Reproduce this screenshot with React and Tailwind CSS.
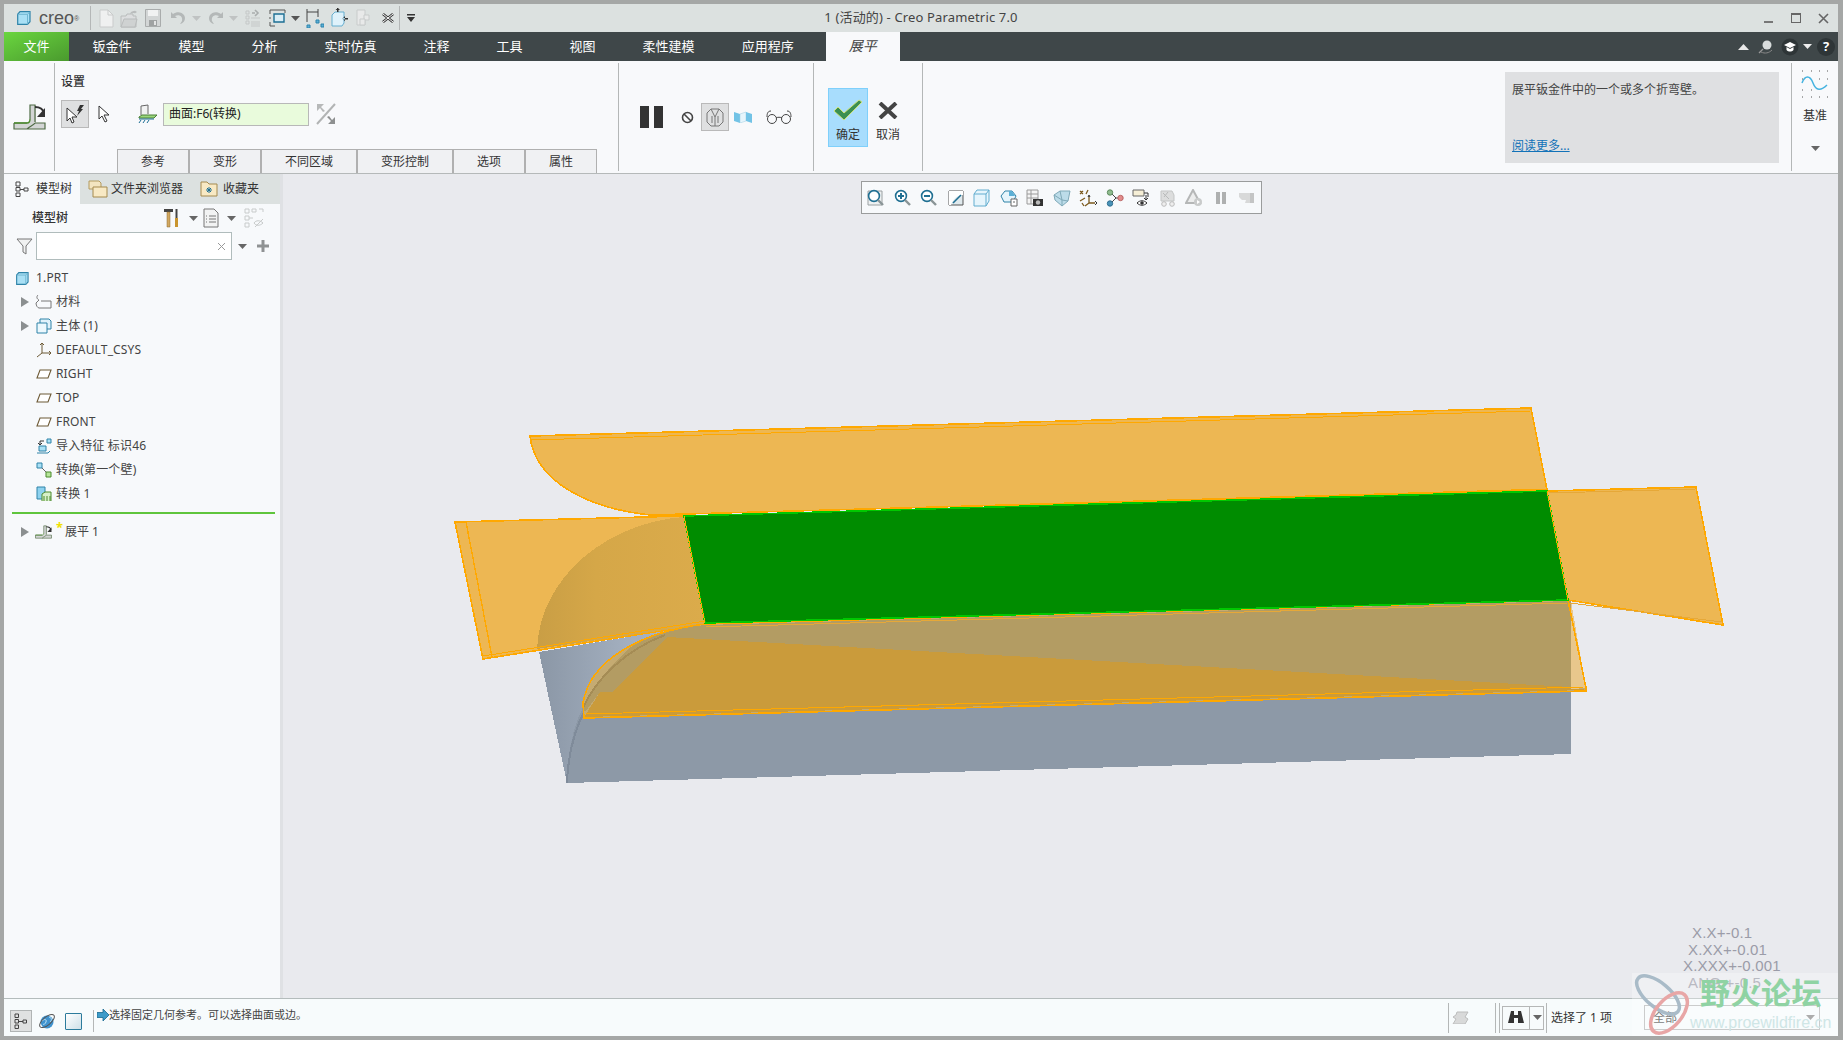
const Sep = ({ className = "" }) => <div className={`w-px shrink-0 bg-[#b4b7b7] ${className}`} />;

const Caret = ({ className = "", color = "#555" }) => (
  <svg width="9" height="5" viewBox="0 0 9 5" className={`shrink-0 ${className}`}><path d="M0 0h9L4.5 5z" fill={color} /></svg>
);
const TreeCaret = () => (
  <svg width="8" height="10" viewBox="0 0 8 10" className="shrink-0"><path d="M0 0l8 5-8 5z" fill="#8b8f90" /></svg>
);

const CubeIcon = ({ size = 14 }) => (
  <svg width={size} height={size} viewBox="0 0 14 14" className="shrink-0">
    <path d="M3 .7h10v10l-2.5 2.6H.7V3.3z" fill="#a9e0f5" stroke="#2f83a8" strokeWidth="1.2" />
    <path d="M.7 3.3h9.8v10M10.5 3.3L13 .7" fill="none" stroke="#6fb6d1" />
  </svg>
);

const NewIcon = () => (
  <svg width="15" height="19" viewBox="0 0 15 19"><path d="M1 1h8l5 5v12H1z" fill="#eff0f0" stroke="#c9cbcb" /><path d="M9 1v5h5" fill="none" stroke="#c9cbcb" /></svg>
);
const OpenIcon = () => (
  <svg width="18" height="19" viewBox="0 0 18 19"><path d="M1 7h5l1-2h6v2l3 0v11H1z" fill="#dcdedf" stroke="#b9bcbc" /><path d="M1 18l3-8h13l-2 8z" fill="#cfd2d2" stroke="#b9bcbc" /><path d="M10 5c1-3 3-3 5-3l-1-1 3 2-3 2 1-1c-2 0-3 0-5 1z" fill="#b9bcbc" /></svg>
);
const SaveIcon = () => (
  <svg width="16" height="18" viewBox="0 0 16 18"><path d="M.5.5h15v17H.5z" fill="#d2d5d5" stroke="#a9acac" /><path d="M3 1h10v6H3z" fill="#f1f2f2" /><path d="M4 11h8v6H4z" fill="#9fa2a2" /><path d="M9 12h2v4H9z" fill="#e3e4e4" /></svg>
);
const UndoIcon = ({ flip }) => (
  <svg width="16" height="14" viewBox="0 0 16 14" style={flip ? { transform: "scaleX(-1)" } : undefined}><path d="M1 1v6h6L5 5c4-2 8 0 7 5l-2 3c5-1 6-6 4-9-2-3-7-4-11-1z" fill="#b4b8b8" /></svg>
);
const RegenIcon = () => (
  <svg width="16" height="18" viewBox="0 0 16 18" fill="none" stroke="#c4c7c7"><path d="M1 2h3v3H1zM1 7h3v3H1zM1 12h3v3H1zM6 13h9M6 15h9M6 17h9M6 9h9" /><path d="M7 4h3M10 1l3 3-3 3" stroke="#a9adad" strokeWidth="1.6" /></svg>
);
const WindowsIcon = () => (
  <svg width="17" height="18" viewBox="0 0 17 18" fill="none"><path d="M1 1h15M1 1v4M16 1v3M1 13v4h5M1 8v2" stroke="#555" /><path d="M5 5h10v8H5z" fill="#d9edf6" stroke="#1d6f94" strokeWidth="1.4" /></svg>
);
const DimIcon = () => (
  <svg width="18" height="20" viewBox="0 0 18 20" fill="none"><path d="M1 1v13M12 1v8M1 4h11" stroke="#444" /><path d="M1 17h3v3H1zM10 12h3v3h-3zM15 16h3v3h-3z" fill="#5cb0d6" stroke="#2c84ad" /></svg>
);
const BoxArrowIcon = () => (
  <svg width="17" height="20" viewBox="0 0 17 20"><path d="M1 7l3-3h9v11l-2 3H1z" fill="#dff2fb" stroke="#67afd0" /><path d="M6 0h1.5v4H6zM4.6 2l2.1-2.2L9 2M12 10h5v1.5h-5zM14 8l-2.5 2.7 2.5 2.6z" fill="#333" /></svg>
);
const CopyIcon = () => (
  <svg width="16" height="18" viewBox="0 0 16 18" fill="#e8e9e9" stroke="#c8cbcb"><path d="M1 1h8v15H1z" /><path d="M8 6h5v5H8z" /><path d="M4 10h5v6H4z" /></svg>
);
const CloseXIcon = () => (
  <svg width="12" height="10" viewBox="0 0 12 10"><path d="M1 1l10 8M11 1L1 9" stroke="#333" strokeWidth="2.6" /><path d="M1 1l10 8M11 1L1 9" stroke="#fff" strokeWidth="1" /></svg>
);

const FlatIcon = ({ small }) => (
  <svg width={small ? 17 : 33} height={small ? 14 : 26} viewBox="0 0 33 26" className="shrink-0">
    <path d="M1 19h13c2 0 3-2 3-4V1h6v18h9v6H1z" fill="#d3d5d5" />
    <path d="M1 19h13M22 19h10v6H1v-6M17 15V1h5v17M14 25c3-3 7-4 8-6" fill="none" stroke="#4f6b45" strokeWidth="1.2" />
    <path d="M1 19h13c2 0 3-2 3-4" fill="none" stroke="#4a8a2c" strokeWidth="1.4" />
    <path d="M22 3c5 0 8 2 9 6" fill="none" stroke="#333" strokeWidth="2" />
    <path d="M32 4v9h-8z" fill="#333" />
  </svg>
);

const Cursor = () => (
  <svg width="12" height="18" viewBox="0 0 12 18"><path d="M1 1v13l3-3 3 6 2-1-3-6h5z" fill="#fff" stroke="#333" /></svg>
);

const SurfaceIcon = () => (
  <svg width="20" height="20" viewBox="0 0 20 20" fill="none">
    <path d="M3 11V2l7-1v9" fill="#f1f2f2" stroke="#666" />
    <path d="M1 13l3-2h15l-3 3H1z" fill="#9ad77c" stroke="#4a7f36" />
    <path d="M1 15h15M3 16l-2 3M7 16l-2 3M11 16l-2 3" stroke="#1d6f94" />
  </svg>
);
const FlipIcon = () => (
  <svg width="20" height="22" viewBox="0 0 20 22" fill="none">
    <path d="M19 1L1 21" stroke="#b2b4b4" strokeWidth="2" />
    <path d="M1 1h7L5 4l4 4-2 1-3-4-3 3z" fill="#b7b9b9" />
    <path d="M19 21h-7l3-3-4-4 2-1 3 4 3-3z" fill="#8e9090" />
  </svg>
);

const ToolIcon = ({ i }) => {
  const common = { width: 18, height: 18, viewBox: "0 0 18 18", fill: "none", className: "shrink-0" };
  const lens = (c = "#1f6f92") => (
    <>
      <circle cx="7" cy="7" r="5.4" fill="#fff" stroke={c} strokeWidth="1.6" />
      <path d="M11 11l5 5" stroke="#8a9496" strokeWidth="2.4" />
    </>
  );
  switch (i) {
    case 0:
      return <svg {...common}><path d="M1 2h14v14H1z" fill="#eef1f2" stroke="#9aa0a2" />{lens()}</svg>;
    case 1:
      return <svg {...common}>{lens()}<path d="M4 7h6M7 4v6" stroke="#1f6f92" strokeWidth="2" /></svg>;
    case 2:
      return <svg {...common}>{lens()}<path d="M4 7h6" stroke="#1f6f92" strokeWidth="2" /></svg>;
    case 3:
      return <svg {...common}><path d="M2 2h14v14H2z" fill="#dfe9ed" stroke="#555" /><path d="M2 2h14v4C10 6 6 10 4 16H2z" fill="#fff" /><path d="M6 14l8-8" stroke="#1f6f92" strokeWidth="1.6" /></svg>;
    case 4:
      return <svg {...common}><path d="M1 5l3-4h12v11l-3 5H1z" fill="#e6f5fc" stroke="#62adcf" /><path d="M1 5h12v12M13 5l3-4" stroke="#62adcf" /></svg>;
    case 5:
      return <svg {...common}><path d="M1 7l4-5h7l4 5-3 6H4z" fill="#e6f5fc" stroke="#2f83a8" /><path d="M9 2l3 0 3 5H9z" fill="#5cb0d6" /><path d="M11 10h6v7h-6z" fill="#fff" stroke="#666" /><path d="M13 13h2" stroke="#666" /></svg>;
    case 6:
      return <svg {...common}><path d="M1 1h11v14H1zM1 5h11M1 9h11M5 1v14" stroke="#9a9a9a" fill="#f4f4f4" /><path d="M7 10h10v7H7z" fill="#333" /><circle cx="12" cy="13.5" r="2.2" fill="#bbb" /></svg>;
    case 7:
      return <svg {...common}><path d="M1 6l6-4h10l-2 10-6 5-7-6z" fill="#bcdce9" stroke="#7fa9b8" /><path d="M7 2l2 9 6 1M1 6l8 5M9 11v6" stroke="#7fa9b8" /></svg>;
    case 8:
      return <svg {...common}><path d="M1 2l3 3M4 2L1 5M9 1l-2 4M10 7v7M10 14h6M10 14l-4 3M1 12l5-3M5 17l-2-3" stroke="#7c5a1e" strokeWidth="1.3" /><path d="M16 12l2 2-2 2M9 8l1-2 1 2" stroke="#333" /></svg>;
    case 9:
      return <svg {...common}><path d="M5 4l5 5-5 5M10 9h4" stroke="#444" /><circle cx="4" cy="3.5" r="2.7" fill="#8fbc8f" stroke="#5d8a5d" /><circle cx="14.5" cy="9" r="2.7" fill="#e28b8b" stroke="#b66" /><circle cx="4" cy="14.5" r="2.7" fill="#4a93b8" stroke="#2f6f92" /></svg>;
    case 10:
      return <svg {...common}><path d="M1 1h11v6H1z" fill="#f6efd6" stroke="#666" /><path d="M12 4h4v4M14 6v4M12 9l2 2 2-2" stroke="#333" /><path d="M5 14c3-3 7-3 10 0-3 3-7 3-10 0z" fill="#fff" stroke="#333" /><circle cx="10" cy="14" r="1.8" fill="#333" /></svg>;
    case 11:
      return <svg {...common}><path d="M2 2h11l2 4v6H2z" fill="#dcdddd" stroke="#c3c5c5" /><path d="M4 4l6 6M9 3l-4 5" stroke="#b8baba" /><circle cx="5" cy="15" r="2.3" fill="#eee" stroke="#bbb" /><circle cx="13" cy="15" r="2.3" fill="#eee" stroke="#bbb" /></svg>;
    case 12:
      return <svg {...common}><path d="M8 1l7 13H1z" fill="#eceded" stroke="#b5b7b7" strokeWidth="2" /><circle cx="13" cy="13" r="4" fill="#c9cbcb" /><path d="M12 11l3 2-3 2z" fill="#fff" /></svg>;
    case 13:
      return <svg {...common}><path d="M4 3h4v12H4zM10 3h4v12h-4z" fill="#aeb0b0" /></svg>;
    default:
      return <svg {...common}><path d="M1 4h15v10H7l1-3H4L1 8z" fill="#d8d9d9" /><path d="M12 4h4v10h-4z" fill="#c4c5c5" /></svg>;
  }
};

const menuItems = ["钣金件", "模型", "分析", "实时仿真", "注释", "工具", "视图", "柔性建模", "应用程序"];
const ribbonTabs = [
  ["参考", "w-[72px]"],
  ["变形", "w-[72px]"],
  ["不同区域", "w-[96px]"],
  ["变形控制", "w-[96px]"],
  ["选项", "w-[72px]"],
  ["属性", "w-[72px]"],
];

const PlaneIcon = () => (
  <svg width="16" height="10" viewBox="0 0 16 10" className="shrink-0"><path d="M4 1h11l-3 8H1z" fill="#fff" stroke="#6d5a36" strokeWidth="1.1" /></svg>
);

const treeRows = [
  { label: "1.PRT", icon: <CubeIcon size={13} />, root: true },
  {
    label: "材料",
    caret: true,
    icon: (
      <svg width="17" height="16" viewBox="0 0 17 16" fill="none" className="shrink-0"><path d="M3 1C1 3 2 5 4 6L1 9c0 3 2 5 3 5h12V7H6" stroke="#777" /></svg>
    ),
  },
  {
    label: "主体 (1)",
    caret: true,
    icon: (
      <svg width="16" height="16" viewBox="0 0 16 16" className="shrink-0"><path d="M4 1h9l2 2v8H4z" fill="#dff2fb" stroke="#2f83a8" /><path d="M1 5h10v10H1z" fill="#ecf8fd" stroke="#2f83a8" /></svg>
    ),
  },
  {
    label: "DEFAULT_CSYS",
    icon: (
      <svg width="16" height="16" viewBox="0 0 16 16" fill="none" stroke="#6d5a36" className="shrink-0"><path d="M6 1v10h9M6 11l-5 4" /><path d="M4 3l2-2 2 2M13 9l2 2-2 2" /></svg>
    ),
  },
  { label: "RIGHT", icon: <PlaneIcon /> },
  { label: "TOP", icon: <PlaneIcon /> },
  { label: "FRONT", icon: <PlaneIcon /> },
  {
    label: "导入特征 标识46",
    icon: (
      <svg width="16" height="16" viewBox="0 0 16 16" className="shrink-0"><path d="M11 1h4v4h-4z" fill="#a9e0f5" stroke="#2f83a8" /><path d="M3 8h7v5H3z" fill="#a9e0f5" stroke="#2f83a8" /><path d="M1 15h11l2-2" fill="none" stroke="#2f83a8" /><path d="M8 3H4v3M2 5l2 2 2-2" fill="none" stroke="#333" /></svg>
    ),
  },
  {
    label: "转换(第一个壁)",
    icon: (
      <svg width="16" height="16" viewBox="0 0 16 16" className="shrink-0"><path d="M1 1h5v5H1z" fill="#a9e0f5" stroke="#2f83a8" /><path d="M10 10h5v5h-5z" fill="#b6e59a" stroke="#4a8a2c" /><path d="M6 6l4 4" stroke="#666" /></svg>
    ),
  },
  {
    label: "转换 1",
    icon: (
      <svg width="16" height="16" viewBox="0 0 16 16" className="shrink-0"><path d="M1 1h8v12H1z" fill="#8ed2ef" stroke="#2f83a8" /><path d="M6 15V8l3-2h6v9" fill="#d8f0c8" stroke="#4a8a2c" /><path d="M8 15v-5M11 15v-5M14 15v-5" stroke="#4a8a2c" /></svg>
    ),
  },
];

function ModelSvg() {
  return (
    <svg viewBox="283 174 1555 824" shapeRendering="crispEdges" className="block h-full w-full">
      <defs>
        <linearGradient id="cone" x1="0" y1="0" x2="1" y2="0">
          <stop offset="0" stopColor="#8b97a6" />
          <stop offset="0.55" stopColor="#a3afbf" />
          <stop offset="1" stopColor="#a9b5c5" />
        </linearGradient>
        <linearGradient id="quarter" x1="0" y1="0" x2="1" y2="0">
          <stop offset="0" stopColor="#c99e45" />
          <stop offset="0.35" stopColor="#d5a748" />
          <stop offset="1" stopColor="#dbab4b" />
        </linearGradient>
      </defs>

      {/* solid body */}
      <path d="M539 652L705 624L1571 600V754L567 783z" fill="#8d99a7" />
      <path d="M539 652L567 783C567 750 574 725 584 705C600 668 640 640 700 625z" fill="url(#cone)" />
      <path d="M567 783C568 755 574 730 586 708" fill="none" stroke="#7f8b9a" strokeWidth="2" />

      {/* top flap */}
      <path d="M530 436L1531 408L1547 490L650 515C585 508 535 480 530 436z" fill="#edb753" stroke="#ffa800" strokeWidth="1.6" />
      <path d="M530 440L1531 411" fill="none" stroke="#ffa800" strokeWidth="1" />

      {/* left flap */}
      <path d="M455 522L684 516L705 624L483 659z" fill="#edb753" stroke="#ffa800" strokeWidth="1.6" />
      <path d="M684 517C610 522 540 575 537 649L705 624z" fill="url(#quarter)" />
      <path d="M466 522L492 657" fill="none" stroke="#ffa800" strokeWidth="1.4" />
      <path d="M483 656L705 621" fill="none" stroke="#ffa800" strokeWidth="1" />
      <path d="M650 515L684 516" fill="none" stroke="#ffa800" strokeWidth="3" />

      {/* bottom flap */}
      <path d="M584 718L583 703C590 660 640 632 705 624L1568 600L1586 688V691z" fill="#c5ab72" />
      <path d="M640 640L680 628L705 625L1571 601V687L667 637L612 692L600 692L585 712L583 708C595 680 625 650 640 640z" fill="#b39c63" />
      <path d="M667 637L1571 687L1586 690L584 717L600 692L612 692z" fill="#ca9b3b" />
      <path d="M1571 601L1586 688L1571 689z" fill="#e8c78c" />
      <path d="M583 708C595 680 625 650 665 635" fill="none" stroke="#a58c55" strokeWidth="2" />
      <path d="M584 718L583 703C590 660 640 632 705 624L1568 600L1586 688V691z" fill="none" stroke="#ffa800" strokeWidth="1.6" />
      <path d="M586 714L1584 687" fill="none" stroke="#ffa800" strokeWidth="1" />
      <path d="M706 627L1568 603" fill="none" stroke="#e6a838" strokeWidth="1" />

      {/* right flap */}
      <path d="M1547 491L1696 487L1723 625L1568 600z" fill="#edb753" stroke="#ffa800" strokeWidth="1.6" />
      <path d="M1549 493L1696 489M1570 603L1722 622" fill="none" stroke="#e6a838" strokeWidth="1" />

      {/* fixed face */}
      <path d="M684 516L1547 491L1568 600L705 623z" fill="#008c00" stroke="#00c800" strokeWidth="1.6" />
      <path d="M684 516L705 623M1547 491L1568 600" fill="none" stroke="#ffa800" strokeWidth="1" />
      <path d="M686 514L1546 489" fill="none" stroke="#ffa800" strokeWidth="1" />
    </svg>
  );
}

export default function App() {
  return (
    <div className="relative flex h-screen w-full flex-col overflow-hidden bg-[#a5a7a6] pt-1 pr-[5px] pb-1 pl-1 font-['Noto_Sans','Noto_Sans_CJK_SC',sans-serif] text-xs text-[#333]">
      {/* title bar */}
      <div className="grid h-7 shrink-0 grid-cols-[1fr_auto_1fr] items-center bg-[#dce1e0]">
        <div className="flex items-center">
          <div className="ml-[13px]"><CubeIcon /></div>
          <span className="ml-2 w-[40px] font-['Liberation_Sans',sans-serif] text-[18px] leading-none text-[#555]">creo<sup className="text-[7px]">®</sup></span>
          <Sep className="ml-[11px] h-6" />
          <div className="ml-[8px] flex items-center"><NewIcon /></div>
          <div className="ml-[6px]"><OpenIcon /></div>
          <div className="ml-[7px]"><SaveIcon /></div>
          <div className="ml-[9px]"><UndoIcon /></div>
          <Caret className="ml-[6px]" color="#c0c3c3" />
          <div className="ml-[7px]"><UndoIcon flip /></div>
          <Caret className="ml-[5px]" color="#c0c3c3" />
          <div className="ml-[7px]"><RegenIcon /></div>
          <div className="ml-[8px]"><WindowsIcon /></div>
          <Caret className="ml-[5px]" />
          <div className="ml-[6px]"><DimIcon /></div>
          <div className="ml-[7px]"><BoxArrowIcon /></div>
          <div className="ml-[8px]"><CopyIcon /></div>
          <div className="ml-[10px]"><CloseXIcon /></div>
          <Sep className="ml-[5px] h-6" />
          <svg width="10" height="8" viewBox="0 0 10 8" className="ml-[6px]"><path d="M1 0h8v1.5H1zM1 3h8L5 8z" fill="#333" /></svg>
        </div>
        <div className="text-[13px] tracking-[0.15px] text-[#444]">1 (活动的) - Creo Parametric 7.0</div>
        <div className="flex items-center justify-end pr-[9px]">
          <div className="mt-2 h-0.5 w-[9px] bg-[#777]" />
          <div className="ml-[18px] h-[10px] w-[10px] border border-t-2 border-[#666]" />
          <svg width="11" height="11" viewBox="0 0 11 11" className="ml-[17px]"><path d="M1 1l9 9M10 1l-9 9" stroke="#666" strokeWidth="1.6" /></svg>
        </div>
      </div>

      {/* menu bar */}
      <div className="flex h-[29px] shrink-0 items-center bg-[#3f4749] text-[13px] text-white">
        <div className="flex h-full w-[65px] items-center justify-center bg-linear-to-br from-[#6ad63f] to-[#4a9a2e]">文件</div>
        {menuItems.map((m) => (
          <div key={m} className="px-[23.5px]">{m}</div>
        ))}
        <div className="ml-[8.5px] flex h-full w-[74px] items-center justify-center bg-[#f8f9fb] text-[14px] text-[#444] italic">展平</div>
        <div className="ml-auto flex items-center pr-[3px]">
          <svg width="11" height="6" viewBox="0 0 11 6"><path d="M0 6l5.500-6 5.500 6z" fill="#e8e8e8" /></svg>
          <svg width="16" height="16" viewBox="0 0 16 16" className="ml-[9px]"><circle cx="9" cy="6" r="4.500" fill="#d8dcdc" /><path d="M5 10l-4 4" stroke="#999" strokeWidth="1.200" /><path d="M3 13c4 2 8 1 11-2" stroke="#888" fill="none" /></svg>
          <svg width="18" height="18" viewBox="0 0 18 18" className="ml-[7px]"><circle cx="9" cy="9" r="8.500" fill="#2e3537" /><path d="M3 7l6-3 6 3-6 3z" fill="#fff" /><path d="M5.500 9v3c2 2 5 2 7 0V9l-3.500 2z" fill="#fff" /></svg>
          <Caret className="ml-1" color="#eee" />
          <div className="ml-[5px] flex h-[18px] w-[18px] items-center justify-center rounded-full bg-[#2e3537] text-[13px] font-bold text-white">?</div>
        </div>
      </div>

      {/* ribbon */}
      <div className="flex h-[113px] shrink-0 border-b border-[#b5b9b9] bg-[#f8f9fb]">
        <div className="flex w-[50px] items-center justify-center"><FlatIcon /></div>
        <Sep className="my-[2px]" />
        <div className="flex w-[563px] flex-col">
          <div className="mt-[13px] ml-[6px] leading-4 font-medium">设置</div>
          <div className="mt-[10px] ml-[6px] flex h-7 items-center">
            <div className="flex h-7 w-7 items-center justify-center border border-[#b9b9b9] bg-[#dfe0e1]">
              <svg width="20" height="20" viewBox="0 0 20 20"><path d="M2 4v13l3-3 2 5 2-1-2-5h5z" fill="#fff" stroke="#333" /><path d="M15 1h4l-3 4h2l-6 7 2-5h-2z" fill="#333" /></svg>
            </div>
            <div className="ml-[9px]"><Cursor /></div>
            <div className="ml-7"><SurfaceIcon /></div>
            <div className="ml-[5px] flex h-[23px] w-[146px] items-center border border-[#b8b8b8] bg-[#e9fbdc] pl-[5px] text-[#222]">曲面:F6(转换)</div>
            <div className="ml-[7px]"><FlipIcon /></div>
          </div>
          <div className="mt-auto ml-[62px] flex">
            {ribbonTabs.map(([t, w]) => (
              <div key={t} className={`flex h-6 items-center justify-center border border-b-0 border-[#b0b0b0] bg-[#f0f1f3] ${w}`}>{t}</div>
            ))}
          </div>
        </div>
        <Sep className="my-[2px]" />
        <div className="flex w-[194px] items-center">
          <svg width="24" height="22" viewBox="0 0 24 22" className="ml-[21px]"><path d="M0 0h9v22H0zM14 0h9v22h-9z" fill="#333" /></svg>
          <svg width="13" height="13" viewBox="0 0 13 13" fill="none" className="ml-[17px]"><circle cx="6.500" cy="6.500" r="5" stroke="#444" strokeWidth="1.600" /><path d="M3 3l7 7" stroke="#444" strokeWidth="1.600" /></svg>
          <div className="ml-[7px] flex h-7 w-7 items-center justify-center border border-[#b9b9b9] bg-[#dfe0e1]">
            <svg width="18" height="20" viewBox="0 0 18 20" fill="none" stroke="#777"><path d="M1 6l4-4h8l4 4v9l-4 4H5l-4-4z" /><path d="M5 2l4 8 4-8M9 10v9M6 9v7M12 9v7" /></svg>
          </div>
          <svg width="18" height="12" viewBox="0 0 18 12" className="ml-[5px]"><path d="M0 1l6 2v9l-6-2z" fill="#72c3e6" /><path d="M6 3l6-2v9l-6 2z" fill="#e6f5fc" stroke="#9ccde2" strokeWidth="0.500" /><path d="M12 1l6 2v9l-6-2z" fill="#72c3e6" /></svg>
          <svg width="28" height="14" viewBox="0 0 28 14" fill="none" stroke="#444" className="ml-[13px]"><circle cx="7" cy="9" r="4.500" /><circle cx="21" cy="9" r="4.500" /><path d="M11 8c1-1 5-1 6 0M2 7c0-4 1-6 4-6M26 7c0-4-1-6-4-6" /></svg>
        </div>
        <Sep className="my-[2px]" />
        <div className="flex w-[108px] items-center">
          <div className="ml-[14px] flex h-[59px] w-10 flex-col items-center border border-[#7fd0fb] bg-[#a8ddfd] pt-[10px]">
            <svg width="30" height="22" viewBox="0 0 30 22" className="shrink-0"><path d="M1 12l4-4 6 6L26 1l3 2-18 18z" fill="#3a8f52" stroke="#cfe27a" /></svg>
            <span className="mt-[6px] leading-4">确定</span>
          </div>
          <div className="ml-[8px] flex h-[59px] w-[24px] flex-col items-center pt-[14px]">
            <svg width="20" height="17" viewBox="0 0 20 17" className="shrink-0"><path d="M2 1l16 15M18 1L2 16" stroke="#444" strokeWidth="4" /></svg>
            <span className="mt-[8px] leading-4">取消</span>
          </div>
        </div>
        <Sep className="my-[2px]" />
        <div className="mt-[11px] ml-auto flex h-[91px] w-[274px] flex-col justify-between bg-[#dfe0e2] px-[7px] pt-[10px] pb-[9px] text-[#444]">
          <div className="leading-4">展平钣金件中的一个或多个折弯壁。</div>
          <span className="w-fit leading-4 text-[#1272b8] underline">阅读更多...</span>
        </div>
        <Sep className="my-[2px] ml-3" />
        <div className="flex w-[46px] flex-col items-center pt-[9px]">
          <svg width="28" height="28" viewBox="0 0 28 28" fill="none">
            <path d="M1 13c3-8 8-8 11 0s8 8 14 2" stroke="#45b3e0" strokeWidth="1.500" />
            <path d="M1 1h1M10 1h1M18 1h1M26 1h1M1 9h1M18 9h1M26 9h1M1 20h1M10 20h1M1 27h1M10 27h1M18 27h1M26 27h1" stroke="#555" />
          </svg>
          <span className="mt-[10px] leading-4">基准</span>
          <Caret className="mt-[22px]" color="#666" />
        </div>
      </div>

      {/* main area */}
      <div className="flex min-h-0 flex-1">
        <div className="flex w-[276px] shrink-0 flex-col bg-[#f7f9fb]">
          <div className="flex h-[30px] shrink-0 items-center bg-[#dce1e0]">
            <div className="flex h-full w-[76px] items-center gap-[7px] bg-[#f7f9fb] pl-[11px]">
              <svg width="14" height="16" viewBox="0 0 14 16" fill="none" stroke="#444"><path d="M1 1h4v4H1zM1 6.500h4v3.500H1zM1 12h4v3.500H1zM9 7h4v3H9zM5 8.500h4" /></svg>
              模型树
            </div>
            <svg width="20" height="18" viewBox="0 0 20 18" className="ml-2"><path d="M1 1h10l2 2v6H1z" fill="#f3e4c0" stroke="#b39a5e" /><path d="M5 7h14v10H5z" fill="#f8e9c4" stroke="#a58a4e" /></svg>
            <span className="ml-[3px]">文件夹浏览器</span>
            <svg width="18" height="16" viewBox="0 0 18 16" className="ml-[17px]"><path d="M1 1h6l2 2h8v12H1z" fill="#f8e9c4" stroke="#a58a4e" /><path d="M9 6v6M6 9h6M7 7l4 4M11 7l-4 4" stroke="#1d6f94" /></svg>
            <span className="ml-[5px]">收藏夹</span>
          </div>
          <div className="flex h-7 shrink-0 items-center">
            <span className="ml-7 font-medium">模型树</span>
            <svg width="18" height="20" viewBox="0 0 18 20" className="ml-[95px]"><path d="M1 1h9v3H1z" fill="#444" /><path d="M4 4h3v15H4z" fill="#d2a860" stroke="#8a6a30" strokeWidth="0.500" /><path d="M13.500 1v9" stroke="#444" strokeWidth="2" /><path d="M12 10h3v9h-3z" fill="#c9952f" /></svg>
            <Caret className="ml-[8px]" color="#666" />
            <svg width="16" height="20" viewBox="0 0 16 20" fill="none" stroke="#777" className="ml-[5px]"><path d="M1 1h10l4 4v14H1z" fill="#f2f3f3" /><path d="M3 8h1M6 8h7M3 11h1M6 11h7M3 14h1M6 14h7" /></svg>
            <Caret className="ml-[8px]" color="#666" />
            <svg width="20" height="20" viewBox="0 0 20 20" fill="none" stroke="#c8cbcb" className="ml-[8px]"><path d="M1 1h4v4H1zM1 8h4v4H1zM1 15h4v4H1zM8 1h4v3H8zM15 1h4v3M5 10h4" /><path d="M10 15c2-3 6-3 9 0-3 3-7 3-9 0zM11 19l8-8" /></svg>
          </div>
          <div className="flex h-7 shrink-0 items-center">
            <svg width="17" height="17" viewBox="0 0 17 17" className="ml-3"><path d="M1 1h15l-6 7v8l-3-2V8z" fill="#f0f1f1" stroke="#777" /></svg>
            <div className="ml-[3px] flex h-7 w-[196px] items-center justify-end border border-[#b0bcbc] bg-white pr-[5px]">
              <svg width="9" height="9" viewBox="0 0 9 9"><path d="M1 1l7 7M8 1L1 8" stroke="#999" /></svg>
            </div>
            <Caret className="ml-[6px]" color="#666" />
            <svg width="12" height="12" viewBox="0 0 12 12" className="ml-[10px]"><path d="M4.500 0h3v4.500H12v3H7.500V12h-3V7.500H0v-3h4.500z" fill="#8f9293" /></svg>
          </div>
          <div className="mt-[6px] flex shrink-0 flex-col">
            {treeRows.map((r) => (
              <div key={r.label} className="flex h-6 items-center tracking-[0.15px] text-[#444]">
                {r.root ? (
                  <>
                    <div className="ml-3">{r.icon}</div>
                    <span className="ml-[7px]">{r.label}</span>
                  </>
                ) : (
                  <>
                    <div className="flex w-[31px] justify-end pr-[6px]">{r.caret && <TreeCaret />}</div>
                    <div className="flex w-[17px] justify-center">{r.icon}</div>
                    <span className="ml-[4px]">{r.label}</span>
                  </>
                )}
              </div>
            ))}
          </div>
          <div className="mt-[6px] ml-2 h-0.5 w-[263px] shrink-0 bg-[#5fc53c]" />
          <div className="mt-[6px] flex h-6 shrink-0 items-center text-[#444]">
            <div className="flex w-[31px] justify-end pr-[6px]"><TreeCaret /></div>
            <div className="flex w-[17px] justify-center"><FlatIcon small /></div>
            <span className="relative ml-[4px] pl-[9px]">
              <span className="absolute top-[-5px] left-0 text-[13px] font-bold text-[#f0e000]">*</span>
              展平 1
            </span>
          </div>
        </div>
        <div className="w-[3px] shrink-0 bg-[#dfe1e4]" />
        <div className="relative min-w-0 flex-1 bg-[#e9eaee]">
          <ModelSvg />
          <div className="absolute top-[7px] left-[578px] flex h-[33px] w-[401px] items-center justify-between border border-[#9a9c9c] bg-[#f7f9fb] px-[5px]">
            {Array.from({ length: 15 }, (_, i) => (
              <ToolIcon key={i} i={i} />
            ))}
          </div>
          <div className="absolute top-[751px] left-[1400px] flex flex-col font-['Liberation_Sans',sans-serif] text-[15px] leading-[16.6px] tracking-[0.2px] text-[#9b9ca8]">
            <span className="pl-[9px]">X.X+-0.1</span>
            <span className="pl-[5px]">X.XX+-0.01</span>
            <span>X.XXX+-0.001</span>
            <span className="pl-[5px]">ANG.+-0.5</span>
          </div>
        </div>
      </div>

      {/* status bar */}
      <div className="flex h-[38px] shrink-0 items-center border-t border-[#b4bcbc] bg-[#f7fbfc]">
        <div className="mt-[7px] ml-[6px] flex h-[22px] w-[22px] items-center justify-center border border-[#b0b4b4] bg-[#dfe1e1]">
          <svg width="14" height="16" viewBox="0 0 14 16" fill="none" stroke="#444"><path d="M1 1h3.500v3.500H1zM1 6.500h3.500V10H1zM1 12h3.500v3.500H1zM9 7h3.500v3H9zM4.500 8.500H9" /></svg>
        </div>
        <svg width="18" height="18" viewBox="0 0 18 18" className="mt-[7px] ml-[6px]"><circle cx="9" cy="10" r="6.500" fill="#3f93cf" /><path d="M4 9c3-3 5-1 4 1s-2 3-3 2M11 5c3 1 3 3 1 5" stroke="#bfe3f5" fill="none" /><ellipse cx="9" cy="9" rx="9" ry="4" transform="rotate(-40 9 9)" fill="none" stroke="#555" /></svg>
        <div className="mt-[7px] ml-[9px] h-[17px] w-[17px] rounded-[1px] border border-[#2c7b9c] bg-linear-to-br from-white to-[#cfe0e8]" />
        <Sep className="mt-[7px] ml-[11px] h-[22px]" />
        <svg width="12" height="12" viewBox="0 0 12 12" className="-mt-[5px] ml-[3px]"><path d="M0 3.500h6V0l6 6-6 6V8.500H0z" fill="#3d9bc9" stroke="#16688f" strokeWidth="0.800" /></svg>
        <span className="-mt-[5px] text-[11px] text-[#444]">选择固定几何参考。可以选择曲面或边。</span>
        <Sep className="ml-auto h-[30px]" />
        <svg width="17" height="13" viewBox="0 0 17 13" className="ml-[3px]"><path d="M5 1h11l-3 5 3 2-3 5H1l3-5-3-2 3-2z" fill="#d8d9d9" stroke="#bcbdbd" /></svg>
        <Sep className="ml-[26px] h-[30px]" />
        <Sep className="ml-[3px] h-[30px]" />
        <div className="ml-[2px] flex h-6 w-[42px] items-center border border-[#b5b7b7]">
          <div className="flex h-full w-[27px] items-center justify-center border-r border-[#b5b7b7]">
            <svg width="16" height="14" viewBox="0 0 16 14"><path d="M3 0h3v4h4V0h3l3 12h-6V7H6v5H0z" fill="#333" /></svg>
          </div>
          <Caret className="ml-[3px]" color="#666" />
        </div>
        <Sep className="ml-[2px] h-[30px]" />
        <span className="ml-1 text-[#333]">选择了 1 项</span>
        <div className="mr-[18px] ml-[32px] flex h-[25px] w-[176px] items-center justify-between border border-[#b5b7b7] pr-[4px] pl-2 text-[#444]">
          全部
          <Caret color="#888" />
        </div>
      </div>

      {/* forum watermark */}
      <div className="absolute right-[5px] bottom-1 h-[63px] w-[206px] bg-white/30">
        <svg width="70" height="63" viewBox="0 0 70 63" fill="none" className="absolute top-0 left-0">
          <ellipse cx="26" cy="22" rx="26" ry="12" transform="rotate(40 26 22)" stroke="#a9bbc8" strokeWidth="3.500" />
          <ellipse cx="37" cy="40" rx="24" ry="13" transform="rotate(-50 37 40)" stroke="#e8a6a6" strokeWidth="3.500" />
        </svg>
        <span className="absolute top-0 left-[68px] font-['Noto_Sans_CJK_SC',sans-serif] text-[30px] leading-9 font-bold tracking-[0.5px] whitespace-nowrap text-[#8fd3a3]">野火论坛</span>
        <span className="absolute top-[40px] left-[58px] font-['Liberation_Sans',sans-serif] text-[16px] leading-5 whitespace-nowrap text-[#cfe6e6]">www.proewildfire.cn</span>
      </div>
    </div>
  );
}
